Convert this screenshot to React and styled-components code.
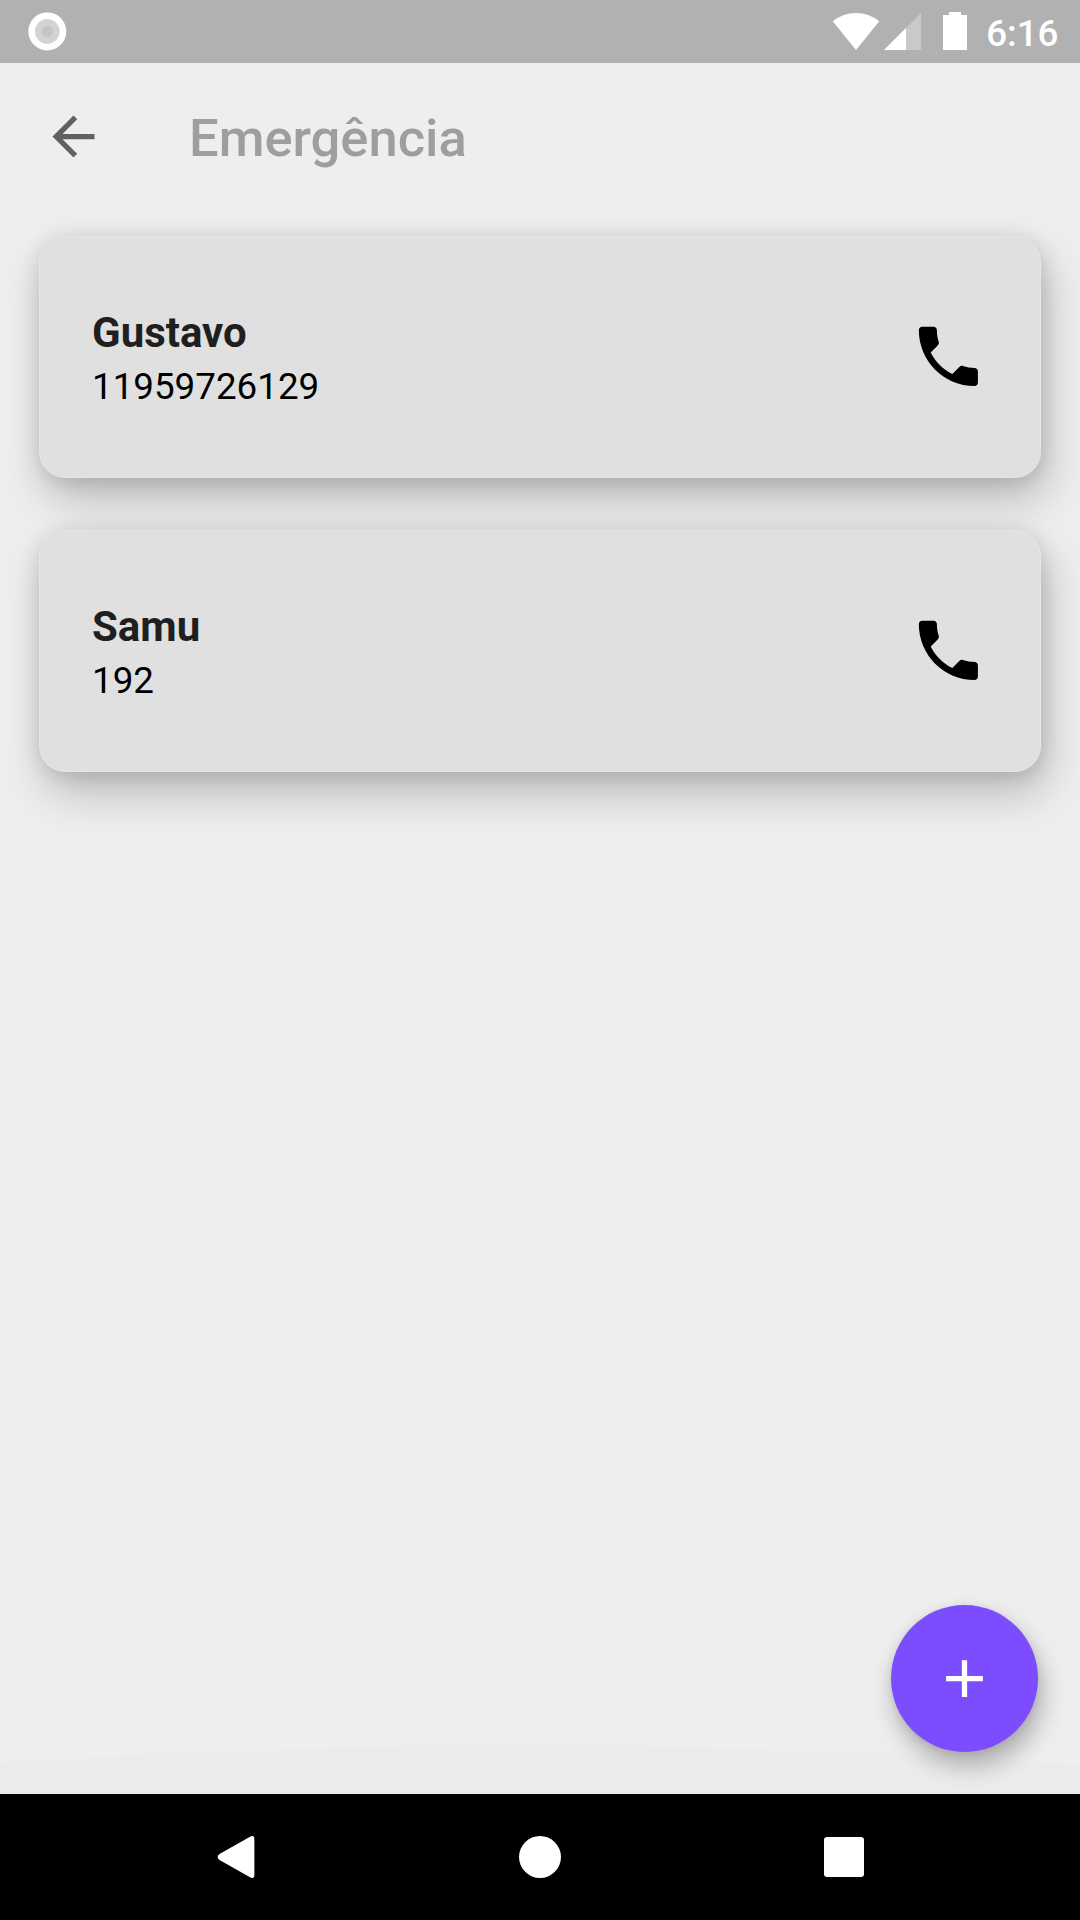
import React from "react";
import styled, { createGlobalStyle } from "styled-components";

const GlobalStyle = createGlobalStyle`
  * { box-sizing: border-box; }
  body { margin: 0; background: #eeeeee; }
`;

const Screen = styled.div`
  width: 1080px;
  height: 1920px;
  display: flex;
  flex-direction: column;
  overflow: hidden;
  background: #eeeeee;
  font-family: Roboto, "Noto Sans", sans-serif;
`;

const StatusBar = styled.header`
  flex: none;
  height: 63px;
  padding: 0 21.5px 0 28px;
  display: flex;
  align-items: center;
  justify-content: space-between;
  background: #b1b1b1;
`;

const StatusIcons = styled.div`
  display: flex;
  align-items: center;
`;

const Clock = styled.span`
  margin-left: 18.5px;
  padding-top: 4px;
  color: #ffffff;
  font-size: 36.75px;
  font-weight: 500;
  line-height: 43px;
`;

const Glyph = styled.svg`
  display: block;
  flex: none;
`;

const AppBar = styled.div`
  flex: none;
  height: 147px;
  padding-left: 42px;
  display: flex;
  align-items: center;
`;

const IconButton = styled.button`
  flex: none;
  display: flex;
  padding: 0;
  border: 0;
  background: none;
`;

const Title = styled.h1`
  margin: 2px 0 0 84px;
  color: #9e9e9e;
  font-size: 52.5px;
  font-weight: 500;
  line-height: 62px;
`;

const Content = styled.main`
  position: relative;
  flex: 1;
  padding: 26px 39px 0;
  display: flex;
  flex-direction: column;
  gap: 52px;
`;

const Card = styled.article`
  height: 242px;
  padding: 0 52.5px 0 52px;
  display: flex;
  align-items: center;
  justify-content: space-between;
  border-radius: 26px;
  border: 1px solid #e6e6e6;
  background: #e0e0e0;
  box-shadow: 6px 21px 44px rgba(0, 0, 0, 0.22), 1px 3px 20px rgba(0, 0, 0, 0.12);
`;

const ContactText = styled.div`
  padding-top: 6px;
  display: flex;
  flex-direction: column;
`;

const ContactName = styled.span`
  color: #1f1f1f;
  font-size: 42px;
  font-weight: 700;
  line-height: 54px;
`;

const ContactNumber = styled.span`
  color: #000000;
  font-size: 36.75px;
  line-height: 54px;
`;

const CallButton = styled(IconButton)`
  margin-bottom: 1px;
`;

const OverscrollGlow = styled.svg`
  position: absolute;
  left: 0;
  bottom: 0;
`;

const Fab = styled.button`
  position: absolute;
  right: 42px;
  bottom: 42px;
  width: 147px;
  height: 147px;
  padding: 0;
  border: 0;
  border-radius: 50%;
  display: flex;
  align-items: center;
  justify-content: center;
  background: #7c4dff;
  box-shadow: 4px 14px 24px rgba(0, 0, 0, 0.28), 0 1px 8px rgba(0, 0, 0, 0.08);
`;

const NavBar = styled.nav`
  position: relative;
  flex: none;
  height: 126px;
  padding: 0 215px;
  display: flex;
  align-items: center;
  justify-content: space-between;
  background: #000000;
`;

const contacts = [
  { name: "Gustavo", number: "11959726129" },
  { name: "Samu", number: "192" },
];

const Contact = ({ name, number }) => (
  <Card>
    <ContactText>
      <ContactName>{name}</ContactName>
      <ContactNumber>{number}</ContactNumber>
    </ContactText>
    <CallButton aria-label="Ligar">
      <Glyph width="78.75" height="78.75" viewBox="0 0 24 24">
        <path d="M6.62 10.79c1.44 2.83 3.76 5.14 6.59 6.59l2.2-2.2c.27-.27.67-.36 1.02-.24 1.12.37 2.33.57 3.57.57.55 0 1 .45 1 1V20c0 .55-.45 1-1 1-9.39 0-17-7.61-17-17 0-.55.45-1 1-1h3.5c.55 0 1 .45 1 1 0 1.25.2 2.45.57 3.57.11.35.03.74-.25 1.02l-2.2 2.2z" />
      </Glyph>
    </CallButton>
  </Card>
);

export default function App() {
  return (
    <Screen>
      <GlobalStyle />
      <StatusBar>
        <Glyph width="39" height="39" viewBox="0 0 39 39">
          <circle cx="19.3" cy="19.4" r="19" fill="#ffffff" />
          <circle cx="19.3" cy="19.4" r="12.4" fill="#d3d3d3" />
          <circle cx="19.3" cy="19.4" r="5.7" fill="#c5c5c5" />
        </Glyph>
        <StatusIcons>
          <Glyph width="136" height="39" viewBox="832 12 136 39">
            <path d="M832.7 21.3Q843 13 856 13t23.3 8.3L856 50z" fill="#fff" />
            <path d="M884 50L921 13v37z" fill="#c9c9c9" />
            <path d="M884 50L906 28v22z" fill="#fff" />
            <path d="M949 12h12v3h6v35h-24V15h6z" fill="#fff" />
          </Glyph>
          <Clock>6:16</Clock>
        </StatusIcons>
      </StatusBar>
      <AppBar>
        <IconButton aria-label="Voltar">
          <Glyph width="63" height="63" viewBox="0 0 24 24">
            <path fill="#616161" d="M20 11H7.83l5.59-5.59L12 4l-8 8 8 8 1.41-1.41L7.83 13H20v-2z" />
          </Glyph>
        </IconButton>
        <Title>Emergência</Title>
      </AppBar>
      <Content>
        {contacts.map((c) => (
          <Contact key={c.name} {...c} />
        ))}
        <OverscrollGlow width="1080" height="49" viewBox="0 0 1080 49">
          <path d="M0 18Q260 0.5 523 0.5T1080 20V49H0z" fill="#ebecee" />
        </OverscrollGlow>
        <Fab aria-label="Adicionar">
          <Glyph width="63" height="63" viewBox="0 0 24 24">
            <path fill="#fff" d="M19 13h-6v6h-2v-6H5v-2h6V5h2v6h6v2z" />
          </Glyph>
        </Fab>
      </Content>
      <NavBar>
        <Glyph width="40" height="42" viewBox="215 1836 40 42">
          <path d="M250.5 1836.5Q254.4 1834.7 254.4 1839V1875Q254.4 1879.3 250.5 1877.5L219.5 1860Q215.8 1857 219.5 1854z" fill="#fff" />
        </Glyph>
        <Glyph width="42" height="42" viewBox="0 0 42 42">
          <circle cx="21" cy="21" r="21" fill="#fff" />
        </Glyph>
        <Glyph width="41" height="42" viewBox="0 0 41 42">
          <rect x="0" y="1" width="40" height="40" rx="3" fill="#fff" />
        </Glyph>
      </NavBar>
    </Screen>
  );
}
